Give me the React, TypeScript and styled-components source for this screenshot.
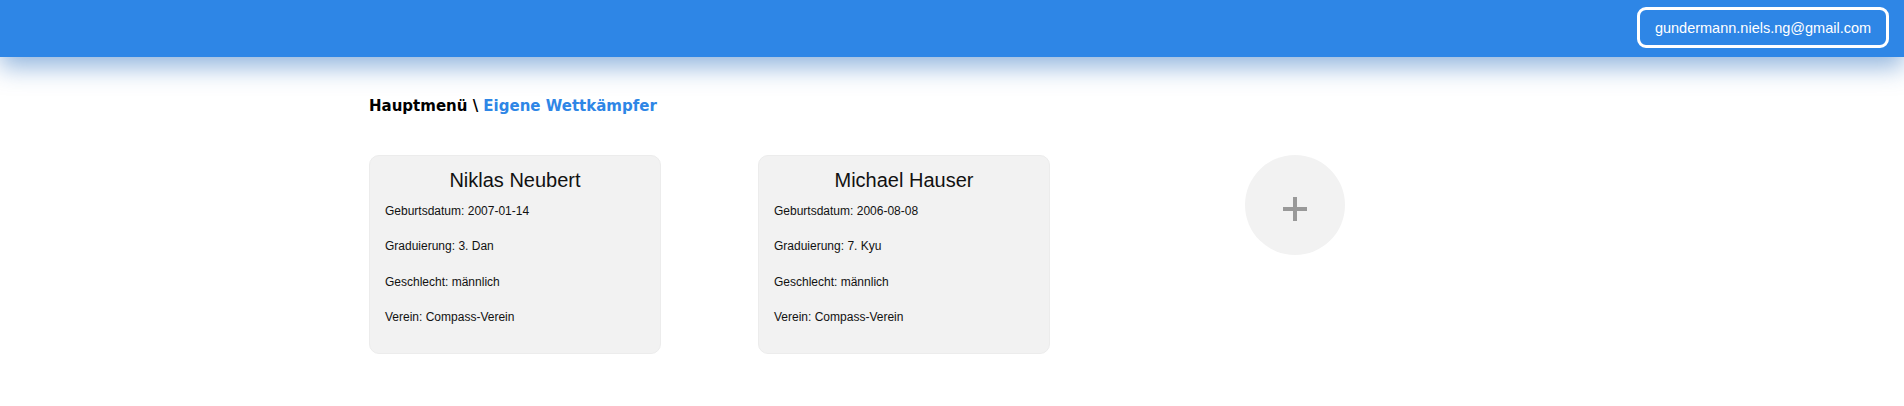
import React from "react";
import styled, { createGlobalStyle } from "styled-components";

const Global = createGlobalStyle`
  html, body { margin: 0; padding: 0; background: #ffffff; }
  body { font-family: "Liberation Sans", Arial, sans-serif; }
`;

const Header = styled.header`
  height: 57px;
  background: #2e86e6;
  display: flex;
  align-items: flex-start;
  justify-content: flex-end;
  padding: 7px 15px 0 0;
  box-sizing: border-box;
  box-shadow: 0 10px 24px rgba(40, 110, 190, 0.5);
  position: relative;
`;

const UserButton = styled.button`
  height: 41px;
  width: 252px;
  box-sizing: border-box;
  border: 3px solid #ffffff;
  border-radius: 9px;
  background: transparent;
  color: #ffffff;
  font-family: "Liberation Sans", Arial, sans-serif;
  font-size: 14.5px;
  padding: 0;
`;

const Main = styled.main`
  width: 1166px;
  margin: 0 auto;
  padding-top: 40px;
`;

const Breadcrumb = styled.div`
  font-family: "DejaVu Sans", sans-serif;
  font-weight: bold;
  font-size: 15px;
  color: #000000;
  line-height: 18px;
`;

const Crumb = styled.span`
  color: #2e86e6;
`;

const Grid = styled.div`
  display: flex;
  gap: 97px;
  margin-top: 40px;
`;

const Card = styled.div`
  width: 292px;
  height: 199px;
  box-sizing: border-box;
  background: #f2f2f2;
  border: 1px solid #ececec;
  border-radius: 10px;
  padding: 13px 15px 0;
  font-family: "Liberation Sans", Arial, sans-serif;
  color: #111111;
`;

const Name = styled.div`
  text-align: center;
  font-size: 20px;
  line-height: 23px;
  margin-bottom: 12px;
`;

const Field = styled.div`
  font-size: 12px;
  line-height: 14px;
  margin-bottom: 21.3px;
`;

const AddSlot = styled.div`
  width: 292px;
  display: flex;
  justify-content: center;
  padding-left: 4px;
  box-sizing: border-box;
`;

const AddButton = styled.button`
  width: 100px;
  height: 100px;
  border-radius: 50%;
  border: none;
  background: #f2f2f2;
  padding: 0;
  display: flex;
  align-items: center;
  justify-content: center;
  padding-top: 7px;
  padding-right: 1px;
  box-sizing: border-box;
`;

const fighters = [
  { name: "Niklas Neubert", born: "2007-01-14", grade: "3. Dan", sex: "männlich", club: "Compass-Verein" },
  { name: "Michael Hauser", born: "2006-08-08", grade: "7. Kyu", sex: "männlich", club: "Compass-Verein" },
];

export default function App() {
  return (
    <>
      <Global />
      <Header>
        <UserButton>gundermann.niels.ng@gmail.com</UserButton>
      </Header>
      <Main>
        <Breadcrumb>
          Hauptmenü \ <Crumb>Eigene Wettkämpfer</Crumb>
        </Breadcrumb>
        <Grid>
          {fighters.map((f) => (
            <Card key={f.name}>
              <Name>{f.name}</Name>
              <Field>Geburtsdatum: {f.born}</Field>
              <Field>Graduierung: {f.grade}</Field>
              <Field>Geschlecht: {f.sex}</Field>
              <Field>Verein: {f.club}</Field>
            </Card>
          ))}
          <AddSlot>
            <AddButton aria-label="Hinzufügen">
              <svg width="24" height="24" viewBox="0 0 24 24">
                <rect x="0" y="10" width="24" height="4" fill="#999999" />
                <rect x="10" y="0" width="4" height="24" fill="#999999" />
              </svg>
            </AddButton>
          </AddSlot>
        </Grid>
      </Main>
    </>
  );
}
